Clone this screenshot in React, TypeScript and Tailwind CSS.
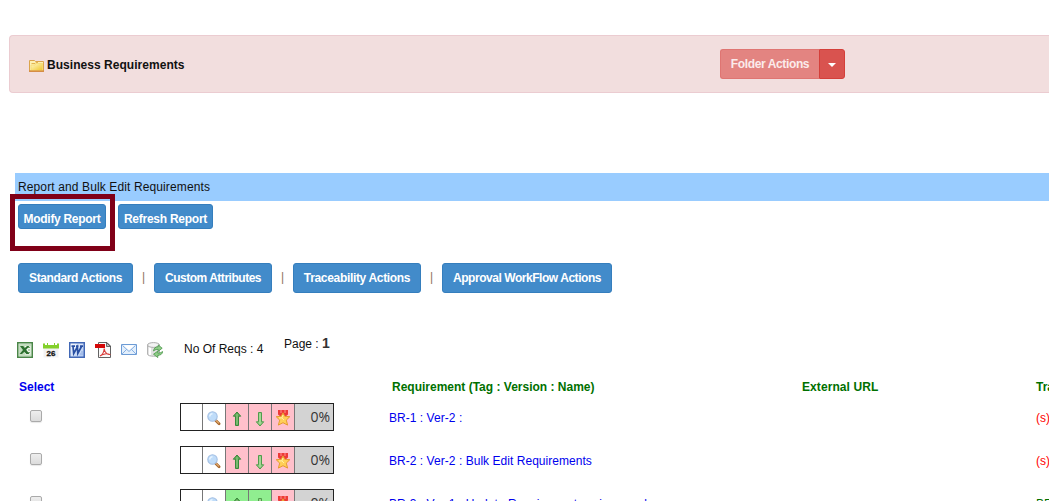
import React from "react";

function Folder() {
  return (
    <svg className="h-[13px] w-[15px] shrink-0" viewBox="0 0 15 13">
      <defs>
        <linearGradient id="fold" x1="0" y1="0" x2="1" y2="1">
          <stop offset="0" stopColor="#fff8c8" />
          <stop offset="1" stopColor="#f0c52c" />
        </linearGradient>
      </defs>
      <path d="M.5 12V1.500h5l1 1h8V12z" fill="#fdf0b4" stroke="#dba44c" />
      <path d="M2 6h4l1-1.500h6.500V11.500H2z" fill="url(#fold)" stroke="#f4d45f" strokeWidth=".6" />
      <path d="M2.500 4.500h3.500l1-1h2" stroke="#e3b450" fill="none" />
      <path d="M0 12.200h15" stroke="#d3873e" strokeWidth="1.400" />
    </svg>
  );
}

function Excel() {
  return (
    <svg className="size-4" viewBox="0 0 16 16">
      <path d="M.75.75h14.500v14.500H.75z" fill="#e5f0e2" stroke="#4a8648" strokeWidth="1.500" />
      <path d="M2 2h12v12H2z" fill="#c4ddbf" />
      <path d="M8 4h5.500v8.500H8z" fill="#f4faf2" />
      <path d="M11 5.500h2M11 8h2M11 10.500h2" stroke="#76a66e" />
      <path d="M3 4h3.200l1.600 2L10 4h2.500L9.200 7.800l3.300 4.200H9.200L7.400 9.800 5 12H2.600l3.400-4z" fill="#2d7130" />
    </svg>
  );
}

function Calendar() {
  return (
    <svg className="size-4" viewBox="0 0 16 16">
      <path d="M.5 5h15v10.500H.5z" fill="#f2f2f2" />
      <path d="M0 1.500h2v1.500h2V1h1v2h6V1h1v2h2V1.500h2v5H0z" fill="#83d02b" />
      <text x="8" y="13.500" textAnchor="middle" className="font-['Liberation_Sans',sans-serif] text-[8px] font-bold" fill="#111" stroke="#111" strokeWidth=".3">26</text>
    </svg>
  );
}

function Word() {
  return (
    <svg className="size-4" viewBox="0 0 16 16">
      <defs>
        <linearGradient id="word" x1="0" y1="0" x2="1" y2="1">
          <stop offset="0" stopColor="#fff" />
          <stop offset="1" stopColor="#a9c4f1" />
        </linearGradient>
      </defs>
      <path d="M.75.75h14.500v14.500H.75z" fill="url(#word)" stroke="#4268b6" strokeWidth="1.500" />
      <path d="M12 10h2M11 12h3" stroke="#8caae0" />
      <path d="M2.500 4.200H6M4 4.500l.7 7L8.400 5l.4 6.500L12.500 4.500M7 4.200h2.500M11 4.200h3" stroke="#284fa3" strokeWidth="1.700" fill="none" />
    </svg>
  );
}

function Pdf() {
  return (
    <svg className="size-4" viewBox="0 0 16 16">
      <path d="M3.500.5H12l3.500 3.500v11.500h-12z" fill="#fafafa" stroke="#636363" />
      <path d="M11.500.5v4h4z" fill="#bbb" stroke="#4d4d4d" strokeWidth=".8" />
      <path d="M0 2h10v4H0z" fill="#d40808" />
      <path d="M5 14c2-1 4-4 4.200-7.500C9.500 10 12 12.500 14.500 12.500c-2-1.500-7-.5-9.500 1.500" fill="none" stroke="#d83a38" strokeWidth="1.100" />
    </svg>
  );
}

function Mail() {
  return (
    <svg className="size-4" viewBox="0 0 16 16">
      <path d="M.5 2.500h15v10H.5z" fill="#e3effc" stroke="#6c9bd5" />
      <path d="M1 12l5-5M15 12l-5-5M1.500 3.500L8 9.500l6.500-6" fill="none" stroke="#87b0e2" />
      <path d="M2.500 3.300h11L8 8.200z" fill="#fff" />
    </svg>
  );
}

function DatabaseSync() {
  return (
    <svg className="size-4" viewBox="0 0 16 16">
      <path d="M.5 3v9c0 3 12 3 12 0V3z" fill="#e2e2e2" stroke="#b4b4b4" />
      <path d="M3 5v8" stroke="#fff" strokeWidth="2" />
      <ellipse cx="6.500" cy="3" rx="6" ry="2.400" fill="#f3f3f3" stroke="#aaa" />
      <path d="M6.500 9c.3-2.800 2-4.300 4.700-4.300V2.900l4 3.300-4 3.100V7.400C9.200 7.300 8 7.800 6.500 9z" fill="#8fcd88" stroke="#3c8c3c" strokeWidth=".7" />
      <path d="M15.700 9.500c-.3 2.500-2 3.800-4.900 3.800v2.300l-4.300-3.400 4.300-3.100v2c2 0 3.200-.6 4.900-1.600z" fill="#8fcd88" stroke="#3c8c3c" strokeWidth=".7" />
    </svg>
  );
}

function Magnifier() {
  return (
    <svg className="size-4" viewBox="0 0 16 16">
      <path d="M9.800 9.500l3.300 3.300" stroke="#a7662c" strokeWidth="2.800" strokeLinecap="round" />
      <path d="M10 9.300l3 3" stroke="#e2ad70" strokeWidth="1.200" />
      <circle cx="6.500" cy="5.500" r="4.700" fill="#bfdcf9" stroke="#a4c0e4" strokeWidth="1.100" />
      <path d="M3.800 5.500a2.700 2.700 0 012.700-2.700" stroke="#e7f4ff" strokeWidth="1.500" fill="none" />
    </svg>
  );
}

function Arrow({ down = false }: { down?: boolean }) {
  return (
    <svg className={down ? "size-4 rotate-180" : "size-4"} viewBox="0 0 16 16">
      <path d="M8 1L4.300 5.200h2.200v9.300h3V5.200h2.200z" fill={down ? "#92ca84" : "#5fa958"} stroke={down ? "#4f9c4c" : "#39883a"} strokeLinejoin="round" />
      <path d="M8 3v10.500" stroke={down ? "#b7e1a7" : "#94cd85"} />
    </svg>
  );
}

function Medal() {
  return (
    <svg className="size-4" viewBox="0 0 16 16">
      <path d="M3 0h10v4.500L10 7H6L3 4.500z" fill="#ed3937" />
      <path d="M6 0v3M10 0v3" stroke="#ff928b" />
      <path d="M8 2.800l1.800 3.500 5 .4-3.500 3.400 1.300 5L8 12.700l-4.600 2.400 1.300-5L1.200 6.700l5-.4z" fill="#ffcf58" stroke="#e69a2f" strokeLinejoin="round" />
      <path d="M8 5L7 7.800l-3 .2M7 8l2 2" stroke="#fff0a0" fill="none" />
    </svg>
  );
}

const actions = [
  { label: "Standard Actions", cls: "w-[115px] tracking-[-0.37px]" },
  { label: "Custom Attributes", cls: "w-[118px] tracking-[-0.48px]" },
  { label: "Traceability Actions", cls: "w-[128px] tracking-[-0.33px]" },
  { label: "Approval WorkFlow Actions", cls: "w-[170px] tracking-[-0.45px]" },
];

const rows = [
  { name: "BR-1 : Ver-2 :", trace: "(s)", approved: false },
  { name: "BR-2 : Ver-2 : Bulk Edit Requirements", trace: "(s)", approved: false },
  { name: "BR-3 : Ver-1 : Update Requirements using excel", trace: "BR", approved: true },
];

const blueButton =
  "shrink-0 whitespace-nowrap rounded-[3px] border border-[#357ebd] bg-[#428bca] text-center font-bold text-white";

export default function App() {
  return (
    <main className="relative h-[501px] w-full overflow-hidden bg-white pt-[35px] font-['Liberation_Sans',Arial,sans-serif] text-[12px] leading-[16px] text-[#111]">
      <section className="ml-[9px] flex h-[58px] items-center rounded-l-[4px] border border-r-0 border-[#ebccd1] bg-[#f2dede] pl-[19px]">
        <div className="flex w-[691px] items-center gap-[3px]">
          <div className="pt-[3px]"><Folder /></div>
          <h1 className="pt-[2px] font-bold tracking-[0.04px]">Business Requirements</h1>
        </div>
        <div className="flex h-[30px] text-white">
          <button className="w-[99px] rounded-l-[3px] border border-r-0 border-[#df7572] bg-[#e38481] text-[12px] font-bold tracking-[-0.37px] text-[#fbebeb]">Folder Actions</button>
          <button className="flex w-[26px] items-center justify-center rounded-r-[3px] border border-[#d43f3a] bg-[#d9534f]">
            <span className="mt-[2px] border-x-4 border-t-4 border-x-transparent border-t-white" />
          </button>
        </div>
      </section>

      <h2 className="mt-[80px] ml-[15px] h-[28px] bg-[#99ccff] pl-[3px] leading-[28px] tracking-[0.12px]">Report and Bulk Edit Requirements</h2>
      <div className="mt-[3px] ml-[18px] flex h-[25px] gap-[12px]">
        <button className={`${blueButton} w-[88px] pt-[5px] tracking-[-0.3px]`}>Modify Report</button>
        <button className={`${blueButton} w-[95px] pt-[5px] tracking-[-0.25px]`}>Refresh Report</button>
      </div>
      <div className="absolute top-[194px] left-[10px] h-[57px] w-[105px] border-[5px] border-[#800018]" />

      <div className="mt-[34px] ml-[18px] flex h-[30px]">
        {actions.map((a, i) => (
          <React.Fragment key={a.label}>
            {i > 0 && <span className="w-[21px] text-center leading-[29px] text-[#8d7460]">|</span>}
            <button className={`${blueButton} ${a.cls}`}>{a.label}</button>
          </React.Fragment>
        ))}
      </div>

      <div className="mt-[49px] ml-[17px] flex h-[16px] items-center gap-[10px]">
        <Excel /><Calendar /><Word /><Pdf /><Mail /><DatabaseSync />
        <span className="mb-[2px] ml-[11px] w-[90px] whitespace-nowrap">No Of Reqs : 4</span>
        <span className="mb-[13px] whitespace-nowrap">Page : <b className="text-[14px] font-bold text-[#333]">1</b></span>
      </div>

      <div className="mt-[21px] ml-[19px] flex h-[16px] font-bold whitespace-nowrap text-[#007000]">
        <span className="w-[373px] shrink-0 text-[#0000ee]">Select</span>
        <span className="w-[410px] shrink-0">Requirement (Tag : Version : Name)</span>
        <span className="w-[234px] shrink-0 tracking-[0.08px]">External URL</span>
        <span className="shrink-0">Traceability</span>
      </div>
      <div className="mt-[8px] flex flex-col gap-[15px]">
        {rows.map((r) => (
          <div key={r.name} className="flex h-[28px] shrink-0 whitespace-nowrap">
            <div className="w-[180px] shrink-0 pt-[7px] pl-[30px]">
              <input type="checkbox" className="block size-[12px] appearance-none rounded-[2px] border border-[#aaa] bg-linear-to-b from-[#eee] to-[#dcdcdc] shadow-[0_1px_1px_#e8e8e8]" />
            </div>
            <div className="flex w-[154px] shrink-0 border border-[#222]">
              <div className="w-[22px] border-r border-[#777]" />
              <div className="flex w-[23px] items-center justify-center border-r border-[#777] pt-[3px]"><Magnifier /></div>
              <div className={`flex w-[23px] items-center justify-center border-r border-[#777] pt-[3px] ${r.approved ? "bg-[#90ee90]" : "bg-[#ffc0cb]"}`}><Arrow /></div>
              <div className={`flex w-[23px] items-center justify-center border-r border-[#777] pt-[3px] ${r.approved ? "bg-[#90ee90]" : "bg-[#ffc0cb]"}`}><Arrow down /></div>
              <div className="flex w-[23px] items-center justify-center border-r border-[#777] bg-[#ffc0cb] pt-[2px]"><Medal /></div>
              <div className="flex-1 bg-[#d3d3d3] pr-[3px] text-right font-['Open_Sans',sans-serif] text-[14px] leading-[25px] text-[#333]">0%</div>
            </div>
            <span className="ml-[55px] w-[647px] shrink-0 pt-[7px] tracking-[0.04px] text-[#0000ee]">{r.name}</span>
            <span className={r.approved ? "pt-[7px] text-[#007000]" : "pt-[7px] text-[#ff0000]"}>{r.trace}</span>
          </div>
        ))}
      </div>
    </main>
  );
}
